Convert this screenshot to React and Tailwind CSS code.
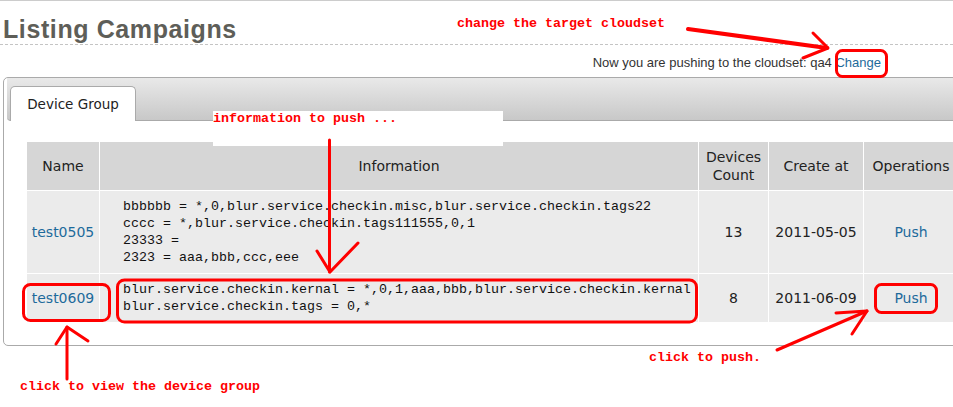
export default function App() {
  const sans = "font-['DejaVu_Sans',Verdana,sans-serif]";
  const mono = "font-['Liberation_Mono','Courier_New',monospace]";
  const red = "font-['Liberation_Mono',monospace] font-bold text-[13.33px] leading-[16px] text-[#ff0000] whitespace-pre";
  return (
    <div className="relative w-[953px] h-[407px] overflow-hidden bg-white border-t border-[#cccccc]">
      <div className="pt-[14px] pl-[3px] pb-[1px] border-b border-dashed border-[#c4c4c4]">
        <h1 className="leading-[28px] text-[25px] font-bold tracking-[0.6px] text-[#5e5e58] font-['Liberation_Sans',Arial,sans-serif]">
          Listing Campaigns
        </h1>
      </div>
      <div className="mt-[10px] pr-[72px] text-right text-[13px] leading-[16px] text-[#333333] font-['Liberation_Sans',Arial,sans-serif]">
        Now you are pushing to the cloudset: qa4 <a className="text-[#1d6a9b]">Change</a>
      </div>

      <div className="mt-[6px] ml-[3px] w-[1000px] h-[269px] border border-[#aaaaaa] rounded-[5px] px-[3px]">
        <div className="h-[43px] bg-linear-to-b from-[#e9e9e9] to-[#c8c8c8] border-b border-[#aaaaaa] rounded-b-[4px] flex items-end pl-[3px]">
          <div className={`w-[126px] h-[35px] -mb-[1px] border border-b-0 border-[#aaaaaa] rounded-t-[5px] bg-white flex items-center justify-center text-[13.5px] text-[#222222] ${sans}`}>
            Device Group
          </div>
        </div>

        <div className={`mt-[21px] ml-[20px] grid grid-cols-[72px_598px_69px_94px_94px] grid-rows-[48px_82px_48px] gap-px bg-white text-[14px] text-[#222222] ${sans}`}>
          <div className="bg-[#d6d6d6] flex items-center justify-center">Name</div>
          <div className="bg-[#d6d6d6] flex items-center justify-center">Information</div>
          <div className="bg-[#d6d6d6] flex items-center justify-center text-center leading-[18px]">Devices<br />Count</div>
          <div className="bg-[#d6d6d6] flex items-center justify-center">Create at</div>
          <div className="bg-[#d6d6d6] flex items-center justify-center">Operations</div>

          <div className="bg-[#ebebeb] flex items-center justify-center text-[#1d6a9b]">test0505</div>
          <div className={`bg-[#ebebeb] flex flex-col justify-center pl-[23px] text-[13.33px] leading-[17px] text-[#111111] whitespace-pre ${mono}`}>
            <div>bbbbbb = *,0,blur.service.checkin.misc,blur.service.checkin.tags22</div>
            <div>cccc = *,blur.service.checkin.tags111555,0,1</div>
            <div>23333 =</div>
            <div>2323 = aaa,bbb,ccc,eee</div>
          </div>
          <div className="bg-[#ebebeb] flex items-center justify-center">13</div>
          <div className="bg-[#ebebeb] flex items-center justify-center">2011-05-05</div>
          <div className="bg-[#ebebeb] flex items-center justify-center text-[#1d6a9b]">Push</div>

          <div className="bg-[#ebebeb] flex items-center justify-center text-[#1d6a9b]">test0609</div>
          <div className={`bg-[#ebebeb] flex flex-col justify-center pl-[23px] text-[13.33px] leading-[17px] text-[#111111] whitespace-pre ${mono}`}>
            <div>blur.service.checkin.kernal = *,0,1,aaa,bbb,blur.service.checkin.kernal</div>
            <div>blur.service.checkin.tags = 0,*</div>
          </div>
          <div className="bg-[#ebebeb] flex items-center justify-center">8</div>
          <div className="bg-[#ebebeb] flex items-center justify-center">2011-06-09</div>
          <div className="bg-[#ebebeb] flex items-center justify-center text-[#1d6a9b]">Push</div>
        </div>
      </div>

      {/* annotations */}
      <div className={`absolute left-[457px] top-[15px] ${red}`}>change the target cloudset</div>
      <div className="absolute left-[213px] top-[110px] w-[290px] h-[35px] bg-white">
        <div className={red}>information to push ...</div>
      </div>
      <div className={`absolute left-[649px] top-[349px] ${red}`}>click to push.</div>
      <div className={`absolute left-[20px] top-[378px] ${red}`}>click to view the device group</div>

      <svg className="absolute left-0 top-0 pointer-events-none" width="953" height="407" viewBox="0 0 953 407" fill="none" stroke="#ff0000" strokeWidth="3" strokeLinecap="round" strokeLinejoin="round">
        <rect x="836.5" y="49.5" width="50" height="26" rx="6" />
        <rect x="23.5" y="283.5" width="86" height="36" rx="7" />
        <rect x="117.5" y="279" width="579" height="42" rx="7" />
        <rect x="875.5" y="283.5" width="61" height="28" rx="6" />
        <path d="M688 28 L827 47" strokeWidth="4" />
        <path d="M813 32 L828 47 L803 57" />
        <path d="M329.5 139 L329.5 271" />
        <path d="M317 250 L330 271 L358 242" />
        <path d="M67 378 L67 326" />
        <path d="M56 343 L67 326 L88 340" />
        <path d="M777 349 L867 310" />
        <path d="M836 312 L867 310 L852 333" />
      </svg>
    </div>
  );
}
